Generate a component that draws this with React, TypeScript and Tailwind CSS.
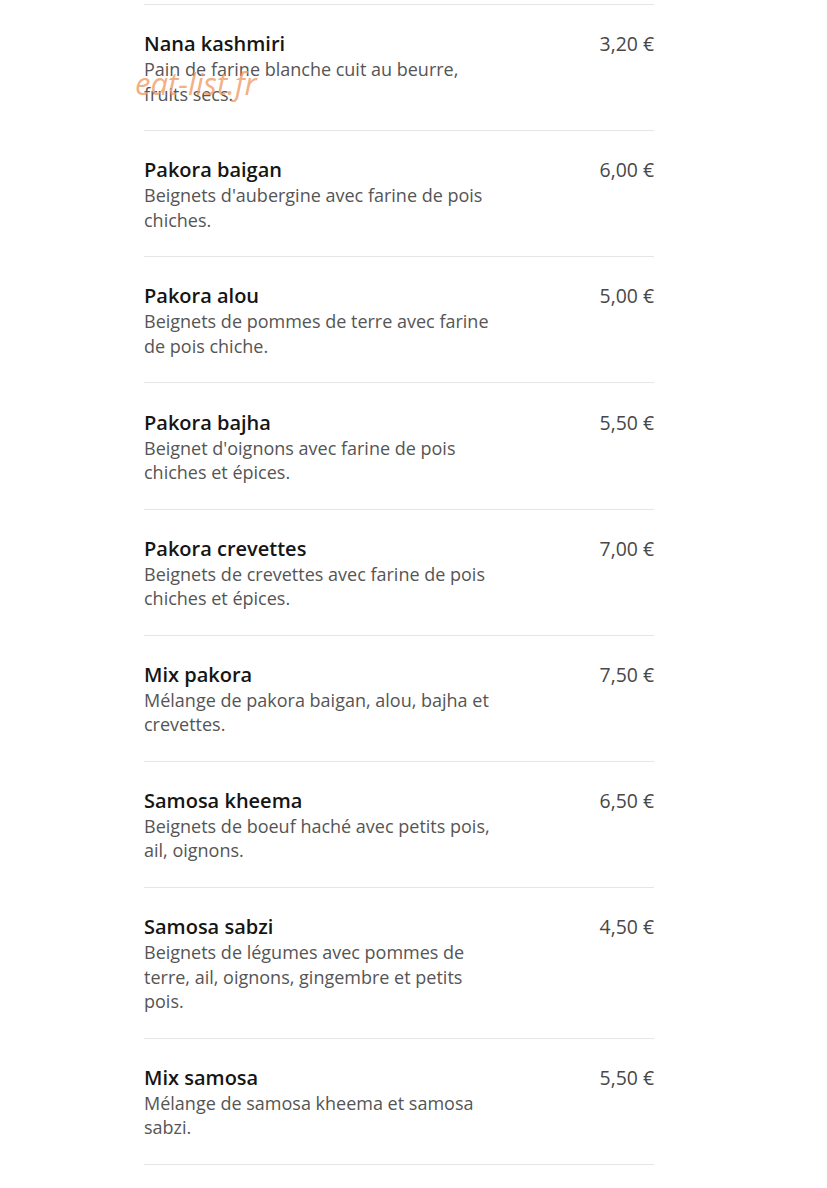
const items = [
  { name: "Nana kashmiri", desc: "Pain de farine blanche cuit au beurre, fruits secs.", price: "3,20 €" },
  { name: "Pakora baigan", desc: "Beignets d'aubergine avec farine de pois chiches.", price: "6,00 €" },
  { name: "Pakora alou", desc: "Beignets de pommes de terre avec farine de pois chiche.", price: "5,00 €" },
  { name: "Pakora bajha", desc: "Beignet d'oignons avec farine de pois chiches et épices.", price: "5,50 €" },
  { name: "Pakora crevettes", desc: "Beignets de crevettes avec farine de pois chiches et épices.", price: "7,00 €" },
  { name: "Mix pakora", desc: "Mélange de pakora baigan, alou, bajha et crevettes.", price: "7,50 €" },
  { name: "Samosa kheema", desc: "Beignets de boeuf haché avec petits pois, ail, oignons.", price: "6,50 €" },
  { name: "Samosa sabzi", desc: "Beignets de légumes avec pommes de terre, ail, oignons, gingembre et petits pois.", price: "4,50 €" },
  { name: "Mix samosa", desc: "Mélange de samosa kheema et samosa sabzi.", price: "5,50 €" },
]

export default function App() {
  return (
    <div className="min-h-screen bg-white font-['Open_Sans',sans-serif]">
      <div className="relative w-[510px] pt-1 ml-[144px]">
        <ul className="border-t border-[#e6e6e6]">
          {items.map((item) => (
            <li key={item.name} className="flex justify-between border-b border-[#e6e6e6] pt-[26.15px] pb-[24px]">
              <div className="w-[360px]">
                <h3 className="text-[20px] leading-[26px] font-semibold text-[#151515]">{item.name}</h3>
                <p className="text-[18px] leading-[24.5px] text-[#555555]">{item.desc}</p>
              </div>
              <span className="text-[19.4px] leading-[26px] font-medium text-[#484848]">{item.price}</span>
            </li>
          ))}
        </ul>
        <span className="absolute left-[-9px] top-[60px] text-[31px] italic text-[#f09a64]/80 pointer-events-none">
          eat-list.fr
        </span>
      </div>
    </div>
  )
}
